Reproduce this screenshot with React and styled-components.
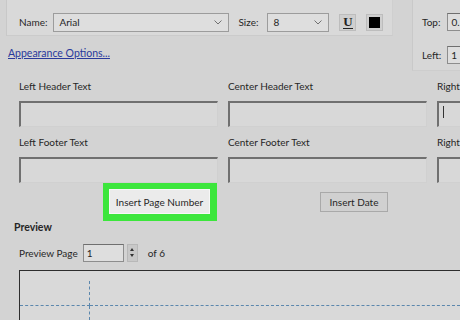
import styled, { createGlobalStyle } from 'styled-components';

const GlobalStyle = createGlobalStyle`
  html, body {
    margin: 0;
    padding: 0;
    background: #d3d3d3;
    overflow: hidden;
  }
  body {
    font-family: Lato, 'Noto Sans', sans-serif;
    font-size: 10px;
    color: #262626;
  }
`;

const Page = styled.div`
  width: 460px;
  height: 320px;
  overflow: hidden;
  display: flex;
  flex-direction: column;
`;

const TopArea = styled.div`
  display: flex;
  height: 72px;
`;

const LeftTop = styled.div`
  display: flex;
  flex-direction: column;
  width: 412px;
  flex-shrink: 0;
`;

const FontPanel = styled.div`
  margin-left: 7px;
  width: 386px;
  height: 36px;
  background: #d9d9d9;
  border-right: 1px solid #cfcfcf;
  border-bottom: 1px solid #cbcbcb;
  box-shadow: -1px 0 0 #c8c8c8;
  display: flex;
  align-items: center;
  padding: 9px 0 0 12px;
  box-sizing: border-box;
`;

const Label = styled.span`
  white-space: nowrap;
  margin-right: ${(p) => p.$mr || 6}px;
  margin-left: ${(p) => p.$ml || 0}px;
`;

const Select = styled.div`
  width: ${(p) => p.$w}px;
  height: 19px;
  box-sizing: border-box;
  border: 1px solid #9c9c9c;
  background: #dedede;
  display: flex;
  align-items: center;
  justify-content: space-between;
  padding: 0 6px 0 5px;
`;

const Chevron = () => (
  <svg width="8" height="5" viewBox="0 0 8 5">
    <path d="M0.5 0.5 L4 4 L7.5 0.5" fill="none" stroke="#707070" strokeWidth="1" />
  </svg>
);

const IconButton = styled.div`
  width: 17px;
  height: 17px;
  box-sizing: border-box;
  border: 1px solid #bdbdbd;
  background: #cfcfcf;
  display: flex;
  align-items: center;
  justify-content: center;
  margin-left: ${(p) => p.$ml || 0}px;
`;

const UGlyph = styled.span`
  font-family: 'Liberation Serif', serif;
  font-weight: bold;
  font-size: 13px;
  line-height: 12px;
  border-bottom: 1.5px solid #222;
  color: #222;
`;

const Swatch = styled.div`
  width: 11px;
  height: 11px;
  background: #000;
`;

const Link = styled.a`
  margin: 11px 0 0 8px;
  color: #2a3a9c;
  text-decoration: underline;
  font-size: 10.5px;
`;

const MarginsPanel = styled.div`
  flex: 1;
  border-left: 1px solid #c9c9c9;
  border-bottom: 1px solid #cdcdcd;
  background: #d7d7d7;
  display: flex;
  flex-direction: column;
  gap: 15px;
  padding: 13px 0 0 9px;
  box-sizing: border-box;
  height: 71px;
`;

const MarginRow = styled.div`
  display: flex;
  align-items: center;
`;

const SmallInput = styled.div`
  width: ${(p) => p.$w || 40}px;
  height: 18px;
  flex-shrink: 0;
  box-sizing: border-box;
  border: 1px solid #8d8d8d;
  border-top-color: #6f6f6f;
  background: #dedede;
  padding-left: 3px;
  display: flex;
  align-items: center;
  white-space: nowrap;
  overflow: hidden;
`;

const FieldGrid = styled.div`
  display: grid;
  grid-template-columns: 199px 199px 199px;
  column-gap: 10px;
  row-gap: 8px;
  padding: 8px 0 0 19px;
`;

const Field = styled.div`
  display: flex;
  flex-direction: column;
  gap: 8px;
`;

const FieldLabel = styled.div`
  height: 14px;
  line-height: 14px;
  white-space: nowrap;
`;

const TextBox = styled.div`
  height: 26px;
  box-sizing: border-box;
  background: #d8d8d8;
  border-top: 2px solid #707070;
  border-left: 2px solid #707070;
  border-right: 1px solid #d0d0d0;
  border-bottom: 1px solid #d0d0d0;
  padding: 3px 4px;
`;

const Caret = styled.div`
  width: 1px;
  height: 12px;
  background: #333;
`;

const ButtonRow = styled.div`
  display: flex;
  align-items: center;
  padding-left: 103px;
  height: 38px;
`;

const Highlight = styled.div`
  border: 6px solid #3ce63c;
  border-bottom-width: 7px;
  border-right-width: 7px;
  height: 38px;
  box-sizing: border-box;
  display: flex;
`;

const Button = styled.div`
  box-sizing: border-box;
  height: ${(p) => (p.$hi ? 25 : 20)}px;
  width: ${(p) => (p.$hi ? 101 : 68)}px;
  border: 1px solid ${(p) => (p.$hi ? '#f7f7f7' : '#a9a9a9')};
  background: ${(p) => (p.$hi ? '#ebebeb' : '#d0d0d0')};
  display: flex;
  align-items: center;
  justify-content: center;
  white-space: nowrap;
  margin-left: ${(p) => p.$ml || 0}px;
`;

const SectionTitle = styled.div`
  font-weight: bold;
  font-size: 10.5px;
  padding-left: 14px;
  height: 14px;
  line-height: 14px;
  margin-top: -1px;
`;

const PreviewBody = styled.div`
  display: flex;
  flex-direction: column;
  padding-left: 19px;
`;

const PageRow = styled.div`
  display: flex;
  align-items: center;
  height: 19px;
  margin-top: 9px;
`;

const Spinner = styled.div`
  width: 11px;
  height: 18px;
  margin-left: 3px;
  margin-right: 10px;
  background: #c8c8c8;
  border: 1px solid #b8b8b8;
  box-sizing: border-box;
  display: flex;
  flex-direction: column;
  align-items: center;
  justify-content: space-around;
  padding: 2px 0;
`;

const Tri = styled.div`
  width: 0;
  height: 0;
  border-left: 2px solid transparent;
  border-right: 2px solid transparent;
  ${(p) => (p.$up ? 'border-bottom: 3px solid #333;' : 'border-top: 3px solid #333;')}
`;

const Canvas = styled.div`
  margin-top: 8px;
  height: 60px;
  border-top: 1px solid #2d2d2d;
  border-left: 1px solid #2d2d2d;
  background: #d9d9d9;
  display: grid;
  grid-template-columns: 70px 1fr;
  grid-template-rows: 35px 1fr;
`;

const Cell = styled.div`
  border-right: ${(p) => (p.$r ? '1px dashed #5b87ad' : 'none')};
  border-bottom: ${(p) => (p.$b ? '1px dashed #5b87ad' : 'none')};
  margin-top: ${(p) => p.$mt || 0}px;
`;

export default function App() {
  return (
    <Page>
      <GlobalStyle />
      <TopArea>
        <LeftTop>
          <FontPanel>
            <Label $mr={6}>Name:</Label>
            <Select $w={176}>
              <span>Arial</span>
              <Chevron />
            </Select>
            <Label $ml={9} $mr={9}>Size:</Label>
            <Select $w={62}>
              <span>8</span>
              <Chevron />
            </Select>
            <IconButton $ml={10}>
              <UGlyph>U</UGlyph>
            </IconButton>
            <IconButton $ml={10}>
              <Swatch />
            </IconButton>
          </FontPanel>
          <Link>Appearance Options...</Link>
        </LeftTop>
        <MarginsPanel>
          <MarginRow>
            <Label $mr={7}>Top:</Label>
            <SmallInput>0.5</SmallInput>
          </MarginRow>
          <MarginRow>
            <Label $mr={6}>Left:</Label>
            <SmallInput>1</SmallInput>
          </MarginRow>
        </MarginsPanel>
      </TopArea>
      <FieldGrid>
        <Field>
          <FieldLabel>Left Header Text</FieldLabel>
          <TextBox />
        </Field>
        <Field>
          <FieldLabel>Center Header Text</FieldLabel>
          <TextBox />
        </Field>
        <Field>
          <FieldLabel>Right Header Text</FieldLabel>
          <TextBox>
            <Caret />
          </TextBox>
        </Field>
        <Field>
          <FieldLabel>Left Footer Text</FieldLabel>
          <TextBox />
        </Field>
        <Field>
          <FieldLabel>Center Footer Text</FieldLabel>
          <TextBox />
        </Field>
        <Field>
          <FieldLabel>Right Footer Text</FieldLabel>
          <TextBox />
        </Field>
      </FieldGrid>
      <ButtonRow>
        <Highlight>
          <Button $hi>Insert Page Number</Button>
        </Highlight>
        <Button $ml={103}>Insert Date</Button>
      </ButtonRow>
      <SectionTitle>Preview</SectionTitle>
      <PreviewBody>
        <PageRow>
          <Label $mr={5}>Preview Page</Label>
          <SmallInput $w={41}>1</SmallInput>
          <Spinner>
            <Tri $up />
            <Tri />
          </Spinner>
          <span>of 6</span>
        </PageRow>
        <Canvas>
          <Cell $r $b $mt={10} />
          <Cell $b />
          <Cell $r />
          <Cell />
        </Canvas>
      </PreviewBody>
    </Page>
  );
}
